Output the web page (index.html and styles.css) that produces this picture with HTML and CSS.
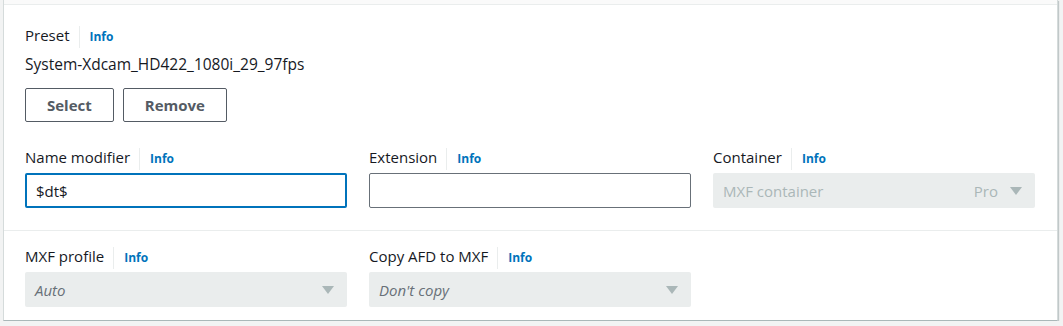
FILE: index.html
```html
<!DOCTYPE html>
<html lang="en">
  <head>
    <meta charset="UTF-8" />
    <title>Output settings</title>
    <link rel="stylesheet" href="styles.css">
  </head>
  <body>
    <div class="card">
      <div class="card-top"></div>

      <div class="section">
        <div class="field">
          <div class="label">Preset <a class="info" href="#">Info</a></div>
          <div class="value">System-Xdcam_HD422_1080i_29_97fps</div>
          <div class="actions">
            <button type="button" class="btn">Select</button>
            <button type="button" class="btn">Remove</button>
          </div>
        </div>

        <div class="grid">
          <div class="field">
            <div class="label">Name modifier <a class="info" href="#">Info</a></div>
            <input type="text" class="input focused" value="$dt$" />
          </div>
          <div class="field">
            <div class="label">Extension <a class="info" href="#">Info</a></div>
            <input type="text" class="input" value="" />
          </div>
          <div class="field">
            <div class="label">Container <a class="info" href="#">Info</a></div>
            <div class="select disabled">
              <span class="select-text">MXF container</span>
              <span class="tag">Pro</span>
              <svg class="caret" width="12" height="8" viewBox="0 0 12 8"><path d="M0 0 L12 0 L6 8 Z" /></svg>
            </div>
          </div>
        </div>
      </div>

      <div class="section second">
        <div class="grid">
          <div class="field">
            <div class="label">MXF profile <a class="info" href="#">Info</a></div>
            <div class="select">
              <span class="select-text placeholder">Auto</span>
              <svg class="caret" width="12" height="8" viewBox="0 0 12 8"><path d="M0 0 L12 0 L6 8 Z" /></svg>
            </div>
          </div>
          <div class="field">
            <div class="label">Copy AFD to MXF <a class="info" href="#">Info</a></div>
            <div class="select">
              <span class="select-text placeholder">Don't copy</span>
              <svg class="caret" width="12" height="8" viewBox="0 0 12 8"><path d="M0 0 L12 0 L6 8 Z" /></svg>
            </div>
          </div>
        </div>
      </div>
    </div>
  </body>
</html>
```

FILE: styles.css
```css
body {
  margin: 0;
  padding: 0;
  background: #f2f3f3;
  font-family: "Open Sans", Arial, sans-serif;
  font-size: 15px;
  color: #16191f;
}
.card {
  margin-left: 3px;
  width: 1053px;
  background: #fff;
  border-left: 1px solid #d5dbdb;
  border-right: 1px solid #d5dbdb;
  border-bottom: 1px solid #aab7b8;
  box-shadow: 1px 1px 1px 0 rgba(0, 28, 36, 0.2);
}
.card-top {
  height: 4px;
  background: #fafafa;
  border-bottom: 1px solid #eaeded;
}
.section {
  padding: 19px 21px 22px 21px;
}
.section.second {
  border-top: 1px solid #eaeded;
  padding-top: 14px;
  padding-bottom: 13px;
}
.label {
  display: flex;
  align-items: baseline;
  height: 22px;
  line-height: 22px;
  margin-bottom: 5px;
}
.info {
  margin-left: 9px;
  padding-left: 10px;
  border-left: 1px solid #eaeded;
  color: #0073bb;
  font-weight: bold;
  font-size: 12px;
  text-decoration: none;
  line-height: 22px;
}
.value {
  line-height: 22px;
  margin-top: 7px;
  font-size: 15.5px;
}
.actions {
  display: flex;
  gap: 9px;
  margin-top: 13px;
  margin-bottom: 24px;
}
.btn {
  height: 34px;
  padding: 0 21px;
  background: #fff;
  border: 1px solid #545b64;
  border-radius: 2px;
  color: #545b64;
  font-family: inherit;
  font-weight: bold;
  font-size: 15px;
}
.grid {
  display: grid;
  grid-template-columns: 322px 322px 322px;
  gap: 22px;
}
.input {
  box-sizing: border-box;
  width: 100%;
  height: 35px;
  margin: 0;
  padding: 0 10px;
  border: 1px solid #687078;
  border-radius: 2px;
  font-family: inherit;
  font-size: 15px;
  color: #16191f;
  outline: none;
}
.input.focused {
  border: 2px solid #0073bb;
  padding: 0 9px;
}
.select {
  box-sizing: border-box;
  display: flex;
  align-items: center;
  height: 35px;
  padding: 0 13px 0 10px;
  background: #eaeded;
  border-radius: 2px;
}
.select-text {
  flex: 1;
  color: #aab7b8;
}
.select-text.placeholder {
  font-style: italic;
  color: #687078;
}
.tag {
  color: #aab7b8;
  margin-right: 12px;
}
.caret {
  fill: #aab7b8;
}
```
